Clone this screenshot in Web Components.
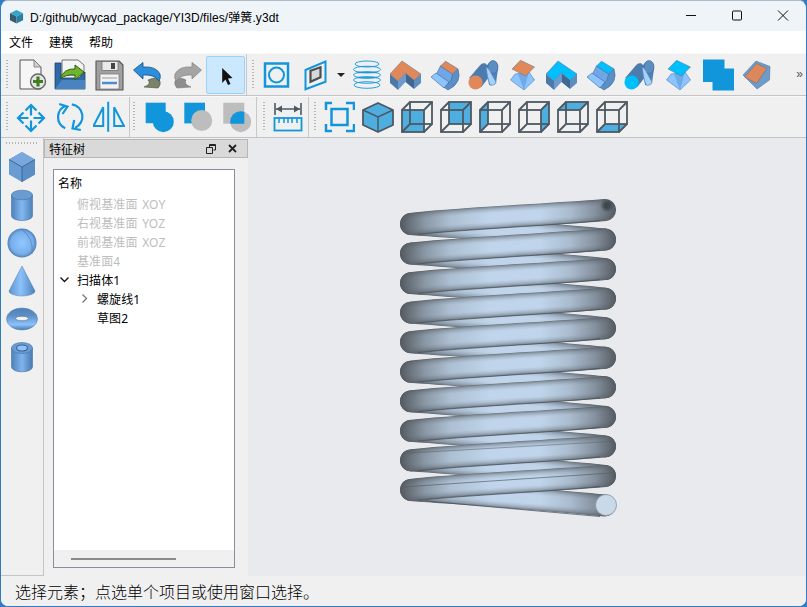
<!DOCTYPE html>
<html lang="zh">
<head>
<meta charset="utf-8">
<title>弹簧.y3dt</title>
<style>
html, body { margin: 0; height: 100%; overflow: hidden; background: #2f7cc4; }
body { font: 12px "Noto Sans", "Noto Sans CJK SC", sans-serif; color: #000; }
</style>
</head>
<body>
<app-window>
  <title-bar>D:/github/wycad_package/YI3D/files/弹簧.y3dt</title-bar>
  <menu-bar><span>文件</span><span>建模</span><span>帮助</span></menu-bar>

  <tool-row height="43">
    <tool-bar pad="2" sep>
      <tool-btn icon="new"></tool-btn><tool-btn icon="open"></tool-btn><tool-btn icon="save"></tool-btn>
      <tool-btn icon="undo"></tool-btn><tool-btn icon="redo"></tool-btn><tool-btn icon="select" active></tool-btn>
    </tool-bar>
    <tool-bar pad="2">
      <tool-btn icon="face"></tool-btn><tool-btn icon="plane"></tool-btn><menu-arrow></menu-arrow>
      <tool-btn icon="helix"></tool-btn>
      <tool-btn icon="lorange"></tool-btn><tool-btn icon="corange"></tool-btn><tool-btn icon="torange"></tool-btn><tool-btn icon="porange"></tool-btn>
      <tool-btn icon="lblue"></tool-btn><tool-btn icon="cblue"></tool-btn><tool-btn icon="tblue"></tool-btn><tool-btn icon="pblue"></tool-btn>
      <tool-btn icon="squares"></tool-btn><tool-btn icon="wedge"></tool-btn>
    </tool-bar>
    <more-mark>»</more-mark>
  </tool-row>

  <tool-row height="42">
    <tool-bar pad="2" sep>
      <tool-btn icon="move"></tool-btn><tool-btn icon="rotate"></tool-btn><tool-btn icon="mirror"></tool-btn>
    </tool-bar>
    <tool-bar sep>
      <tool-btn icon="union"></tool-btn><tool-btn icon="subtract"></tool-btn><tool-btn icon="intersect"></tool-btn>
    </tool-bar>
    <tool-bar sep pad="3">
      <tool-btn icon="measure"></tool-btn>
    </tool-bar>
    <tool-bar pad="2">
      <tool-btn icon="fit"></tool-btn><tool-btn icon="cube"></tool-btn>
      <tool-btn icon="vfront"></tool-btn><tool-btn icon="vback"></tool-btn><tool-btn icon="vleft"></tool-btn>
      <tool-btn icon="vright"></tool-btn><tool-btn icon="vtop"></tool-btn><tool-btn icon="vbottom"></tool-btn>
    </tool-bar>
  </tool-row>

  <main-area>
    <side-bar>
      <tool-btn icon="sbox" tall></tool-btn><tool-btn icon="scyl" tall></tool-btn><tool-btn icon="ssphere" tall></tool-btn>
      <tool-btn icon="scone" tall></tool-btn><tool-btn icon="storus" tall></tool-btn><tool-btn icon="stube" tall></tool-btn>
    </side-bar>
    <dock-panel label="特征树">
      <tree-row class="head" header>名称</tree-row>
      <tree-row depth="1" off>俯视基准面 XOY</tree-row>
      <tree-row depth="1" off>右视基准面 YOZ</tree-row>
      <tree-row depth="1" off>前视基准面 XOZ</tree-row>
      <tree-row depth="1" off>基准面4</tree-row>
      <tree-row depth="1" arrow="open">扫描体1</tree-row>
      <tree-row depth="2" arrow="closed">螺旋线1</tree-row>
      <tree-row depth="2">草图2</tree-row>
    </dock-panel>
    <spring-view></spring-view>
  </main-area>

  <status-bar>选择元素；点选单个项目或使用窗口选择。</status-bar>
</app-window>

<script>
const BLUE = "#1296db", WIRE = "#4d5862", FACE = "#4eaee0";

// one solid L block, top face colour passed in
const lBlock = top => `
  <polygon points="0,15 8,22 8,31 0,24" fill="#4c7aa8"/>
  <polygon points="8,22 15.5,14 15.5,23 8,31" fill="#6d9bd0"/>
  <polygon points="15.5,14 24,21 24,30 15.5,23" fill="#3f6792"/>
  <polygon points="24,21 31,15 31,24 24,30" fill="#5f8dbd"/>
  <polygon points="12,2 31,15 24,21 15.5,14 8,22 0,15" fill="${top}" stroke="#5a6f84" stroke-width=".5"/>`;

const curve = top => `
  <path d="M23.5 15 L29 10 Q33.5 24 19 31 L14.500 28 Z" fill="#5b8fc7" stroke="#3f6792" stroke-width=".6"/>
  <path d="M11.500 7 L23.500 15 Q23 22 19 25 L7 16 Z" fill="#6fa7e6" stroke="#41668f" stroke-width=".6"/>
  <polygon points="2,18 7,14 20,23 15,29" fill="#8cc4ff" stroke="#41668f" stroke-width=".6"/>
  <polygon points="11.500,7 16.500,2.300 28.800,9.700 23.500,15" fill="${top}" stroke="#41668f" stroke-width=".5"/>`;

const tubes = cap => `
  <path d="M18.500 7 Q22 1 27 2.500 Q30.500 4 30 10 L28 24 Q26 27 21 26 Z" fill="#4f81b5"/>
  <ellipse cx="25" cy="8" rx="5" ry="6.500" fill="#5c8ec3" stroke="#3f6792" stroke-width=".6"/>
  <path d="M1.500 19 L13 5.500 Q18 2.500 19.500 8 L20 19 L13 28 Z" fill="#4c7cad" stroke="#3f6792" stroke-width=".5"/>
  <path d="M18 8 Q21 9 23 14 L28 23 Q27 27 22 26 Q19 18 18 8 Z" fill="#a4d2fb" stroke="#4f81b5" stroke-width=".6"/>
  <circle cx="7.500" cy="23.500" r="7" fill="${cap}"/>`;

const pyramid = top => `
  <polygon points="3.500,21 8,15 22,13 27.500,21 17,31" fill="#8cc4ff" stroke="#4f81b5" stroke-width=".6"/>
  <polygon points="11,15 22,13 17,31" fill="#6ea9e8"/>
  <polygon points="5,10 13.500,1.300 27.500,8 18.500,17" fill="${top}" stroke="#5a6f84" stroke-width=".5"/>`;

const wireCube = face => `
  <polygon points="${face}" fill="${FACE}"/>
  <g fill="none" stroke="${WIRE}" stroke-width="1.800">
    <rect x="1" y="9" width="22" height="22"/><rect x="9" y="1" width="22" height="22"/>
    <path d="M1 9 L9 1 M23 9 L31 1 M1 31 L9 23 M23 31 L31 23"/>
  </g>`;

const ICONS = {
  new: `<path d="M5 1 H19 L26 8 V30 H5 Z" fill="#f6f6f6" stroke="#555" stroke-width="1"/>
    <path d="M19 1 V8 H26 Z" fill="#cfcfcf" stroke="#777" stroke-width=".8"/>
    <circle cx="23" cy="22.500" r="7.500" fill="#e5e5e5" stroke="#666" stroke-width="1.400"/>
    <path d="M23 17.500 V27.500 M18 22.500 H28" stroke="#3f7d20" stroke-width="3.200"/>`,
  open: `<path d="M8 1 H24 L30 6 V16 H8 Z" fill="#f4f4f4" stroke="#555" stroke-width=".8"/>
    <path d="M1 4 H7 V19 H25 L31 13 V30 H1 Z" fill="#2f6aa8" stroke="#1f3f66" stroke-width=".8"/>
    <path d="M1 30 L8 21 H31 V30 Z" fill="#4a84c0"/>
    <path d="M6 20 Q10 9 21 10 V6 L30 13 L21 21 V16 Q12 15 6 20 Z" fill="#6fb52c" stroke="#2e5c12" stroke-width="1"/>`,
  save: `<path d="M3 2 H26 L30 6 V31 H3 Z" fill="#a0a0a0" stroke="#555" stroke-width="1.100" stroke-linejoin="round"/>
    <rect x="9" y="2.500" width="16" height="9" fill="#e9e9e9" stroke="#666" stroke-width=".7"/>
    <rect x="18" y="4" width="4" height="6" fill="#444"/>
    <rect x="7" y="15" width="19" height="15" fill="#f2f2f2" stroke="#777" stroke-width=".7"/>
    <path d="M9 19 H24" stroke="#9a9a9a"/><path d="M9 24 H24" stroke="#4d8cd0" stroke-width="2.400"/>`,
  undo: `<path d="M16 21 Q24 17 28 22 Q29 26 26 29 L12 28 Q20 25 16 21 Z" fill="#7b8269" stroke="#4a4f3c" stroke-width=".6"/>
    <path d="M1.500 11 L11 3.500 V8 Q24 7 28 15 Q29 19 27 22 Q22 15 11 16 V20 Z" fill="#2b8fdc" stroke="#14517f" stroke-width=".8"/>`,
  redo: `<path d="M15 21 Q8 17 4 22 Q3 26 6 29 L20 28 Q12 25 15 21 Z" fill="#8d8d8d" stroke="#777" stroke-width=".6"/>
    <path d="M30.500 11 L21 3.500 V8 Q8 7 4 15 Q3 19 5 22 Q10 15 21 16 V20 Z" fill="#a4a4a4" stroke="#888" stroke-width=".8"/>`,
  select: `<path d="M12.200 9 V24 L15.500 20.500 L18 26 L20.500 25 L18 19.500 L22.500 19 Z" fill="#111"/>`,
  face: `<rect x="4" y="4.500" width="23" height="23" fill="none" stroke="${BLUE}" stroke-width="2.500"/>
    <circle cx="15.500" cy="16" r="7.500" fill="none" stroke="${BLUE}" stroke-width="2"/>`,
  plane: `<polygon points="5.500,11 25.500,2.500 25.500,22.700 5.500,30.300" fill="none" stroke="${BLUE}" stroke-width="2"/>
    <polygon points="10.500,11.700 20.500,8.300 20.500,18.300 10.500,22.700" fill="#d8d8d8" stroke="#4a4f55" stroke-width="2.200"/>`,
  helix: `<g fill="none" stroke="${BLUE}" stroke-width=".9">
    <ellipse cx="16" cy="5" rx="12" ry="3"/><ellipse cx="16" cy="10.500" rx="13.500" ry="3.300"/>
    <ellipse cx="16" cy="16" rx="13.500" ry="3.300"/><ellipse cx="16" cy="21" rx="13.500" ry="3.300"/>
    <ellipse cx="16" cy="26" rx="13" ry="3.300"/></g>
    <path d="M6 13.500 H26 M6 18.500 H26" stroke="${BLUE}" stroke-width="1.300" opacity=".8"/>`,
  lorange: lBlock("#e0885a"), lblue: lBlock("#00bfff"),
  corange: curve("#e0885a"), cblue: curve("#00bfff"),
  torange: tubes("#e0885a"), tblue: tubes("#00bfff"),
  porange: pyramid("#e0885a"), pblue: pyramid("#00bfff"),
  squares: `<polygon points="1,0.500 22.500,0.500 22.500,9.500 32,9.500 32,31.500 10.500,31.500 10.500,23 1,23" fill="${BLUE}"/>`,
  wedge: `<polygon points="2,16 15,2 29,7.500 28.500,21 16,30" fill="#6f9bcb" stroke="#5a7a9c" stroke-width=".6"/>
    <polygon points="3.500,18 15.500,4.500 26,9.500 15.500,24.500" fill="#dd875a" stroke="#5a6f84" stroke-width=".5"/>`,
  move: `<g fill="none" stroke="${BLUE}" stroke-width="2.200">
    <path d="M16 4 V14.500 M16 19.500 V30 M3 17 H13.500 M18.500 17 H29"/>
    <path d="M10.500 9.500 L16 4 L21.500 9.500 M10.500 24.500 L16 30 L21.500 24.500 M8.500 11.500 L3 17 L8.500 22.500 M23.500 11.500 L29 17 L23.500 22.500"/></g>`,
  rotate: `<g fill="none" stroke="${BLUE}" stroke-width="2.200">
    <path d="M11.800 4.700 A12.300 12.300 0 0 0 11.200 27.300"/><path d="M17.800 3.300 A12.300 12.300 0 0 1 21.200 26.700"/>
    <path d="M5.200 3 L13.500 5.700 L8.500 13"/><path d="M20.200 19 L18.500 27.300 L26.800 29"/></g>`,
  mirror: `<g fill="none" stroke="${BLUE}" stroke-width="2">
    <polygon points="10.200,6.300 10.200,25 .5,25"/><polygon points="21.200,6.300 21.200,25 31,25"/></g>
    <path d="M15.200 .7 V30.700" stroke="${BLUE}" stroke-width="2"/>`,
  union: `<rect x="3.700" y="1.700" width="20" height="20.500" fill="${BLUE}"/><circle cx="21.300" cy="20.700" r="10.500" fill="${BLUE}"/>`,
  subtract: `<rect x="3.300" y="1.700" width="20.700" height="20.700" fill="${BLUE}"/><circle cx="20.700" cy="19.500" r="10.500" fill="#bdbdbd"/>`,
  intersect: `<defs><clipPath id="c"><rect x="3.300" y="1.700" width="21" height="21"/></clipPath></defs>
    <rect x="3.300" y="1.700" width="21" height="21" fill="#bdbdbd"/><circle cx="20.700" cy="20.700" r="10.500" fill="#bdbdbd"/>
    <circle cx="20.700" cy="20.700" r="10.500" fill="${BLUE}" clip-path="url(#c)"/>`,
  measure: `<path d="M3 2 V14 M29 2 V14" stroke="${WIRE}" stroke-width="1.600"/>
    <path d="M4 8 H28" stroke="${WIRE}" stroke-width="1.500"/>
    <path d="M4 8 L10 4.500 V11.500 Z M28 8 L22 4.500 V11.500 Z" fill="${WIRE}"/>
    <rect x="2.500" y="17" width="27" height="12.500" fill="none" stroke="${BLUE}" stroke-width="1.800"/>
    <path d="M7 17 V22 M12 17 V22 M16 17 V22 M20 17 V22 M25 17 V22" stroke="${BLUE}" stroke-width="1.500"/>`,
  fit: `<g fill="none" stroke="${BLUE}" stroke-width="2.500">
    <path d="M9 2 H3 V9 M23 2 H31 V9 M3 23 V30 H9 M31 23 V30 H23"/>
    <rect x="8.500" y="8" width="16" height="16"/></g>`,
  cube: `<polygon points="16,2 31,9 31,24 16,31 1,24 1,9" fill="${FACE}" stroke="${WIRE}" stroke-width="1.800" stroke-linejoin="round"/>
    <path d="M1 9 L16 16 L31 9 M16 16 V31" fill="none" stroke="${WIRE}" stroke-width="1.500"/>`,
  vfront: wireCube("1,9 23,9 23,31 1,31"),
  vback: wireCube("9,1 31,1 31,23 9,23"),
  vleft: wireCube("1,9 9,1 9,23 1,31"),
  vright: wireCube("23,9 31,1 31,23 23,31"),
  vtop: wireCube("1,9 9,1 31,1 23,9"),
  vbottom: wireCube("9,23 31,23 23,31 1,31"),
  sbox: `<polygon points="16,1 29,8.500 29,23.500 16,31 3,23.500 3,8.500" fill="#6a9cd4"/>
    <polygon points="16,16 29,8.500 29,23.500 16,31" fill="#5c8ec6"/>
    <polygon points="16,1 29,8.500 16,16 3,8.500" fill="#7aa8de"/>
    <path d="M3 8.500 L16 16 L29 8.500 M16 16 V31" fill="none" stroke="#3f6792" stroke-width="1"/>`,
  scyl: `<defs><linearGradient id="g"><stop offset="0" stop-color="#4f81b8"/><stop offset=".5" stop-color="#82b8f2"/><stop offset="1" stop-color="#4f81b8"/></linearGradient></defs>
    <path d="M5.500 6 V27 A10.500 4.500 0 0 0 26.500 27 V6 Z" fill="url(#g)" stroke="#47729f" stroke-width=".6"/>
    <ellipse cx="16" cy="6" rx="10.500" ry="4.800" fill="#6a9cd4" stroke="#47729f" stroke-width=".6"/>`,
  ssphere: `<defs><radialGradient id="g" cx=".5" cy=".5" r=".55"><stop offset="0" stop-color="#92c8ff"/><stop offset=".7" stop-color="#76aeec"/><stop offset="1" stop-color="#3e6c9c"/></radialGradient></defs>
    <circle cx="16" cy="16" r="14.500" fill="url(#g)"/><path d="M15 2 Q28 10 26 27" fill="none" stroke="#4f7fb2" stroke-width=".7"/>`,
  scone: `<defs><linearGradient id="g"><stop offset="0" stop-color="#5f93cc"/><stop offset=".45" stop-color="#8cc2fb"/><stop offset="1" stop-color="#4f81b8"/></linearGradient></defs>
    <path d="M16 1 L29 26 A13 5 0 0 1 3 26 Z" fill="url(#g)" stroke="#4f7fb2" stroke-width=".5"/>`,
  storus: `<defs><linearGradient id="g" x2="0" y2="1"><stop offset="0" stop-color="#4f80b6"/><stop offset=".35" stop-color="#5d90c8"/><stop offset=".75" stop-color="#8cc2fb"/><stop offset="1" stop-color="#4a7aae"/></linearGradient></defs>
    <ellipse cx="16" cy="16" rx="15.500" ry="11" fill="url(#g)" stroke="#4f7fb2" stroke-width=".5"/>
    <ellipse cx="16" cy="15.500" rx="6.500" ry="2.300" fill="#f0f0f0" stroke="#3f6792" stroke-width=".6"/>`,
  stube: `<defs><linearGradient id="g"><stop offset="0" stop-color="#4f81b8"/><stop offset=".5" stop-color="#7fb4ee"/><stop offset="1" stop-color="#4a7aae"/></linearGradient></defs>
    <path d="M5.500 7 V26 A10.500 4.800 0 0 0 26.500 26 V7 Z" fill="url(#g)" stroke="#47729f" stroke-width=".6"/>
    <ellipse cx="16" cy="7" rx="10.500" ry="5.500" fill="#6a9cd4" stroke="#47729f" stroke-width=".6"/>
    <ellipse cx="16" cy="7" rx="5.500" ry="3" fill="#8ec3fa" stroke="#3f6792" stroke-width="1.200"/>`
};

class BaseElement extends HTMLElement {
  // each subclass sets static css + markup()
  connectedCallback() {
    if (this.shadowRoot) return;
    this.attachShadow({ mode: "open" });
    this.shadowRoot.innerHTML = `<style>${this.constructor.css}</style>${this.markup()}`;
  }
  markup() { return "<slot></slot>"; }
}

class AppWindow extends BaseElement {
  static css = `:host { display: flex; flex-direction: column; box-sizing: border-box; width: 807px; height: 607px;
    border: 1px solid #2f7cc4; border-top-color: #aebcca; border-radius: 8px; overflow: hidden; background: #f0f0f0; }`;
}

class TitleBar extends BaseElement {
  static css = `:host { display: flex; align-items: center; height: 30px; flex: none; background: #eff4f9; font: 12px "Liberation Sans", "Noto Sans CJK SC", sans-serif; letter-spacing: .08px; }
    .logo { margin: 0 6px 0 8px; }
    .text { flex: 1; white-space: nowrap; }
    .win { display: flex; }
    .win svg { width: 46px; height: 30px; }`;
  markup() {
    return `<svg class="logo" width="15" height="15" viewBox="0 0 16 16">
        <polygon points="8,1 15,4.500 8,8 1,4.500" fill="#35a5c9"/>
        <polygon points="1,4.500 8,8 8,15.500 1,12" fill="#38596e"/>
        <polygon points="15,4.500 8,8 8,15.500 15,12" fill="#2b7f9f"/></svg>
      <span class="text"><slot></slot></span>
      <span class="win">
        <svg viewBox="0 0 46 30"><path d="M18 14.500 H28" stroke="#111" stroke-width="1"/></svg>
        <svg viewBox="0 0 46 30"><rect x="18.500" y="10" width="9" height="9" rx="1" fill="none" stroke="#111"/></svg>
        <svg viewBox="0 0 46 30"><path d="M18 9.500 L28 19.500 M28 9.500 L18 19.500" stroke="#111" stroke-width="1"/></svg>
      </span>`;
  }
}

class MenuBar extends BaseElement {
  static css = `:host { display: flex; align-items: center; gap: 16px; height: 22px; flex: none; padding: 0 0 0 8px; background: #fff; font-size: 12px; }
    ::slotted(span) { display: block; }`;
}

class ToolRow extends BaseElement {
  static css = `:host { display: flex; box-sizing: border-box; flex: none; position: relative; background: #f0f0f0; border-bottom: 1px solid #c4c4c4; border-top: 1px solid #f8f8f8; }`;
  connectedCallback() {
    super.connectedCallback();
    this.style.height = this.getAttribute("height") + "px";
  }
}

const GRIP = `repeating-linear-gradient(to bottom, #b4b4b4 0 1.500px, transparent 1.500px 3px)`;

class ToolBar extends BaseElement {
  static css = `:host { display: flex; align-items: center; box-sizing: border-box; padding-right: 1px; }
    :host([sep]) { border-right: 1px solid #c8c8c8; padding-right: 1px; }
    .grip { width: 2px; height: 30px; margin: 0 3px 0 3px; background: ${GRIP}; flex: none; }`;
  markup() { return `<div class="grip"></div><slot></slot>`; }
  connectedCallback() {
    super.connectedCallback();
    if (this.hasAttribute("pad")) this.style.paddingLeft = this.getAttribute("pad") + "px";
  }
}

class ToolBtn extends BaseElement {
  static css = `:host { display: flex; align-items: center; justify-content: center; box-sizing: border-box; width: 39px; height: 38px; flex: none; border: 1px solid transparent; border-radius: 2px; }
    :host([active]) { background: #cce8ff; border-color: #99d1ff; }
    :host([tall]) { width: 42px; }
    svg { width: 32px; height: 32px; display: block; }`;
  markup() {
    return `<svg viewBox="0 0 32 32">${ICONS[this.getAttribute("icon")] || ""}</svg>`;
  }
}

class MenuArrow extends BaseElement {
  static css = `:host { display: flex; align-items: center; justify-content: center; width: 12px; height: 38px; flex: none; }
    i { width: 0; height: 0; border: 4px solid transparent; border-top: 4px solid #222; border-bottom: 0; }`;
  markup() { return "<i></i>"; }
}

class MoreMark extends BaseElement {
  static css = `:host { position: absolute; right: 3px; top: 13px; font: 12px "Liberation Sans", sans-serif; color: #555; }`;
}

class MainArea extends BaseElement {
  static css = `:host { display: flex; flex: 1; min-height: 0; }`;
}

class SideBar extends BaseElement {
  static css = `:host { display: flex; flex-direction: column; box-sizing: border-box; width: 43px; flex: none; border-right: 1px solid #c4c4c4; border-bottom: 1px solid #c4c4c4; }
    .grip { height: 2px; margin: 4px 4px 4px 5px; flex: none; background: repeating-linear-gradient(to right, #b4b4b4 0 1.500px, transparent 1.500px 3px); }`;
  markup() { return `<div class="grip"></div><slot></slot>`; }
}

class DockPanel extends BaseElement {
  static css = `:host { display: flex; flex-direction: column; box-sizing: border-box; width: 204px; flex: none; background: #f0f0f0; }
    .bar { display: flex; align-items: center; box-sizing: border-box; height: 19px; flex: none; margin-top: 1px; padding: 0 10px 0 4px; background: #d9d9d9; border: 1px solid #b6b6b6; font-size: 12px; }
    .bar span { flex: 1; }
    .bar svg { display: block; }
    .tree { display: flex; flex-direction: column; flex: 1; min-height: 0; margin: 11px 13px 8px 9px; background: #fff; border: 1px solid #8a8d9c; }
    .rows { flex: 1; padding-top: 2px; }
    .scroll { display: flex; align-items: center; height: 17px; flex: none; background: #f0f0f0; }
    .scroll i { display: block; width: 105px; height: 2px; margin-left: 17px; background: #8a8a8a; }`;
  markup() {
    return `<div class="bar"><span>${this.getAttribute("label")}</span>
        <svg width="10" height="10" viewBox="0 0 10 10" style="margin-right:12px"><path d="M3.500 .5 H9.500 V6 H7.500 M.5 3.500 H6.500 V9.500 H.5 Z M3.500 .5 V3.500" fill="none" stroke="#222"/><path d="M3.500 1.500 H9.500" stroke="#222"/></svg>
        <svg width="9" height="9" viewBox="0 0 9 9"><path d="M1 1 L8 8 M8 1 L1 8" stroke="#222" stroke-width="1.800"/></svg></div>
      <div class="tree"><div class="rows"><slot></slot></div><div class="scroll"><i></i></div></div>`;
  }
}

class TreeRow extends BaseElement {
  static css = `:host { display: flex; align-items: center; height: 19px; font-size: 12px; white-space: pre; word-spacing: 1.500px; letter-spacing: .1px; position: relative; padding-left: 4px; }
    :host([off]) { color: #bdbdbd; }
    :host([header]) { height: 22px; margin-bottom: 0; }
    svg { position: absolute; top: 5px; }`;
  markup() {
    const depth = +this.getAttribute("depth") || 0;
    const arrow = this.getAttribute("arrow");
    if (depth) this.style.paddingLeft = (depth * 20 + 3) + "px";
    let mark = "";
    if (arrow === "open") mark = `<svg width="9" height="9" viewBox="0 0 9 9" style="left:${depth * 20 - 14}px"><path d="M.5 2.500 L4.500 6.500 L8.500 2.500" fill="none" stroke="#111" stroke-width="1.300"/></svg>`;
    if (arrow === "closed") mark = `<svg width="9" height="9" viewBox="0 0 9 9" style="left:${depth * 20 - 14}px"><path d="M2.500 .5 L6.500 4.500 L2.500 8.500" fill="none" stroke="#777" stroke-width="1.300"/></svg>`;
    return mark + "<slot></slot>";
  }
}

class SpringView extends BaseElement {
  static css = `:host { display: block; flex: 1; min-width: 0; background: #e8eaee; }
    svg { display: block; width: 100%; height: 100%; }`;
  markup() {
    const dark = [84, 90, 96], light = [192, 213, 235];
    const mix = k => "rgb(" + dark.map((d, i) => Math.round(d + (light[i] - d) * k)).join(",") + ")";
    const stops = [[400, .02], [410, .2], [425, .5], [450, .82], [490, 1], [540, 1], [570, .8], [595, .45], [608, .18], [617, .02]];
    const widths = [22, 21, 20, 18.5, 17, 15, 13, 10.5, 8, 5];
    let defs = "";
    widths.forEach((w, n) => {
      const t = w / 22;
      const f = Math.min(1, Math.pow(1 - t * t + .02, .55) + .1);
      defs += `<linearGradient id="s${n}" gradientUnits="userSpaceOnUse" x1="400" y1="0" x2="617" y2="0">` +
        stops.map(([x, g]) => `<stop offset="${(x - 400) / 217}" stop-color="${mix(f * g)}"/>`).join("") + `</linearGradient>`;
    });
    const tube = d => widths.map((w, n) =>
      `<path d="${d}" fill="none" stroke="url(#s${n})" stroke-width="${w}" stroke-linecap="round"/>`).join("");

    const pitch = 29.55, leftY = i => 224 + pitch * i, rightY = i => 210 + pitch * i;
    const front = i => `M411 ${leftY(i)} C450 ${leftY(i) - 5} 560 ${rightY(i) + 4} 605 ${rightY(i)}`;
    const back = i => `M605 ${rightY(i + 1)} C560 ${rightY(i + 1) - 5} 450 ${leftY(i) + 3} 411 ${leftY(i)}`;

    let out = "";
    for (let i = 0; i < 10; i++) {
      out += tube(back(i));
      if (i == 9) out += `<path d="M425 ${leftY(i) + 11} L600 ${rightY(i + 1) + 11}" stroke="#48525c" stroke-width="1" opacity=".75"/>`;
    }
    for (let i = 0; i < 10; i++) {
      out += tube(front(i));
      out += `<path d="M418 ${leftY(i) + 10.500} C455 ${leftY(i) + 6} 560 ${rightY(i) + 15} 600 ${rightY(i) + 10.500}" fill="none" stroke="#4a545e" stroke-width="1" opacity=".8"/>`;
    }
    // seam lines on the two lowest turns
    out += `<path d="M403 ${leftY(9) - 3} L612 ${rightY(9) - 3}" stroke="#56626e" stroke-width="1" opacity=".7"/>`;
    out += `<path d="M403 ${leftY(8) - 7} L612 ${rightY(8) - 5}" stroke="#56626e" stroke-width="1" opacity=".5"/>`;
    // open ends of the swept tube
    out += `<circle cx="606" cy="505" r="10.500" fill="#c8d9ea" stroke="#8c96a0" stroke-width=".8"/>`;
    out += `<defs><radialGradient id="end"><stop offset=".35" stop-color="#3f474e"/><stop offset="1" stop-color="#3f474e" stop-opacity="0"/></radialGradient></defs><circle cx="607" cy="205.500" r="7" fill="url(#end)"/>`;
    return `<svg viewBox="248 138 558 437" preserveAspectRatio="xMinYMin"><defs>${defs}</defs>${out}</svg>`;
  }
}

class StatusBar extends BaseElement {
  static css = `:host { display: flex; align-items: center; height: 30px; flex: none; padding-left: 14px; background: #f0f0f0; font-size: 16px; font-weight: 300; }`;
}

customElements.define("app-window", AppWindow);
customElements.define("title-bar", TitleBar);
customElements.define("menu-bar", MenuBar);
customElements.define("tool-row", ToolRow);
customElements.define("tool-bar", ToolBar);
customElements.define("tool-btn", ToolBtn);
customElements.define("menu-arrow", MenuArrow);
customElements.define("more-mark", MoreMark);
customElements.define("main-area", MainArea);
customElements.define("side-bar", SideBar);
customElements.define("dock-panel", DockPanel);
customElements.define("tree-row", TreeRow);
customElements.define("spring-view", SpringView);
customElements.define("status-bar", StatusBar);
</script>
</body>
</html>
